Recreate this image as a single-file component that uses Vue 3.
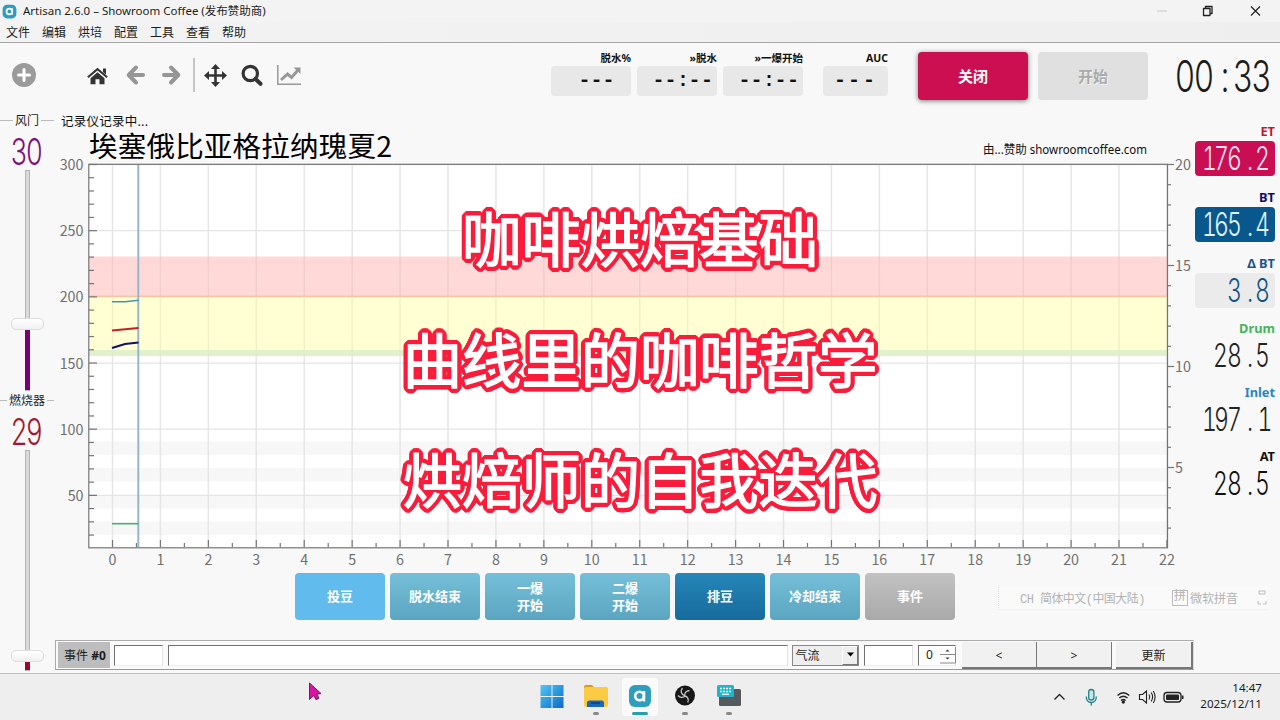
<script setup>
const menus = ['文件', '编辑', '烘培', '配置', '工具', '查看', '帮助']
const phases = [
  { label: '脱水%', value: '---', x: '33.5 45.5 57.5', cls: 'w80' },
  { label: '»脱水', value: '--:--', x: '21.5 33.5 46 57.5 70', cls: 'w80' },
  { label: '»一爆开始', value: '--:--', x: '21.5 33.5 46 57.5 70', cls: 'w80' },
  { label: 'AUC', value: '---', x: '17 31 46', cls: 'w65 auc' },
]
const events = [
  { label: '投豆', cls: 'active' },
  { label: '脱水结束', cls: '' },
  { label: '一爆\n开始', cls: '' },
  { label: '二爆\n开始', cls: '' },
  { label: '排豆', cls: 'drop' },
  { label: '冷却结束', cls: '' },
  { label: '事件', cls: 'gray' },
]
const readouts = [
  { name: 'ET', value: '176.2', cls: 'et', x: [14.5, 26.5, 39.5, 55, 67.5] },
  { name: 'BT', value: '165.4', cls: 'bt', x: [14.5, 26.5, 39.5, 55, 67.5] },
  { name: 'Δ BT', value: '3.8', cls: 'dbt', x: [39.5, 55, 67.5] },
  { name: 'Drum', value: '28.5', cls: 'drum', x: [25.5, 39.5, 55, 67.5] },
  { name: 'Inlet', value: '197.1', cls: 'inlet', x: [14.5, 26.5, 39.5, 55, 70] },
  { name: 'AT', value: '28.5', cls: 'at', x: [25.5, 39.5, 55, 67.5] },
]
const sliders = [
  { name: '风门', value: '30', cls: 'air' },
  { name: '燃烧器', value: '29', cls: 'burner' },
]
// LCD digits are condensed horizontally; cell centres are given in unscaled pixels
const SQUEEZE = 0.72
const cells = (xs) => xs.map((x) => (x / SQUEEZE).toFixed(2)).join(' ')
const condensed = `scale(${SQUEEZE} 1)`

const px = (m) => 112.5 + m * 47.93
const py = (t) => 164.5 + (300 - t) * 1.3235
const pr = (r) => 164.5 + (20 - r) * 20.2
const minutes = Array.from({ length: 23 }, (_, i) => i)
const halves = Array.from({ length: 22 }, (_, i) => i + 0.5)
const temps = [300, 250, 200, 150, 100, 50]
const minorTemps = Array.from({ length: 29 }, (_, i) => (i + 2) * 10).filter((t) => t % 50)
const rates = [20, 15, 10, 5]
const minorRates = Array.from({ length: 18 }, (_, i) => i + 2).filter((r) => r % 5)
const bands = [441.5, 468, 495, 521.5]

// Round outline for the caption: two rings of shadows
const ringOf = (radius) => Array.from({ length: 24 }, (_, i) => {
  const a = (i / 24) * Math.PI * 2
  return `${(Math.cos(a) * radius).toFixed(2)}px ${(Math.sin(a) * radius).toFixed(2)}px 0 #fa1c3b`
})
const outline = [...ringOf(4.9), ...ringOf(2.6)].join(', ')
</script>

<template>
  <div class="window">
    <header class="titlebar">
      <svg class="logo" viewBox="0 0 24 24"><rect x="1" y="1" width="22" height="22" rx="7" fill="#2f9cbd" /><circle cx="11.7" cy="12" r="4.5" fill="none" stroke="#fff" stroke-width="2.7" /><path d="M16.4 7v10" stroke="#fff" stroke-width="2.6" /></svg>
      <span class="title">Artisan 2.6.0 – Showroom Coffee (发布赞助商)</span>
      <svg class="winctl" viewBox="0 0 120 22" fill="none">
        <path d="M7 11h10" stroke="#c8c8c8" />
        <path d="M53.500 8.500h6.500v7h-6.500zM55.500 8.200v-1.700h6.500v7h-1.700" stroke="#222" stroke-width="1.300" stroke-linejoin="round" />
        <path d="M101 6.500l9 9m0-9l-9 9" stroke="#222" stroke-width="1.200" />
      </svg>
    </header>
    <nav class="menubar"><span v-for="m in menus" :key="m">{{ m }}</span></nav>

    <section class="toolbar">
      <svg class="tools" viewBox="0 43 320 64">
        <circle cx="24" cy="75" r="12" fill="#9b9b9b" />
        <path d="M24 69.500v11M18.500 75h11" stroke="#fff" stroke-width="3" stroke-linecap="round" />
        <path d="M97.500 67.800l10.300 8.700-1.300 1.500-9-7.600-9 7.600-1.300-1.500zM103 68.500h3v6l-3-2.500z" fill="#343434" />
        <path d="M97.500 72.200l7 6v6h-5v-5h-4v5h-5v-6z" fill="#343434" />
        <g fill="none" stroke="#969696" stroke-width="4" stroke-linecap="round" stroke-linejoin="round">
          <path d="M143 75h-14M136 67.500l-7.300 7.500 7.300 7.500" />
          <path d="M164 75h14M171 67.500l7.300 7.500-7.300 7.500" />
        </g>
        <path d="M194 58v34" stroke="#aaa" stroke-width="1.300" />
        <path d="M215.500 66v19M206 75.500h19" stroke="#343434" stroke-width="2.600" />
        <path d="M215.500 64l4.500 5h-9zM215.500 87l4.500-5h-9zM204 75.500l5-4.500v9zM227 75.500l-5-4.500v9z" fill="#343434" />
        <circle cx="250.300" cy="73.500" r="7.200" fill="none" stroke="#343434" stroke-width="3.200" />
        <path d="M255.500 79l5 4.800" stroke="#343434" stroke-width="4" stroke-linecap="round" />
        <path d="M277.800 65v19.300H301" fill="none" stroke="#989898" stroke-width="1.500" />
        <path d="M281 80l6.500-6 4 3.500 7-8" fill="none" stroke="#989898" stroke-width="3" />
        <path d="M293.500 67.500h7v6.500z" fill="#989898" />
      </svg>
      <div class="phases">
        <div v-for="p in phases" :key="p.label" :class="['phase', p.cls]">
          <b>{{ p.label }}</b>
          <svg class="phase-lcd" height="30"><text :x="p.x" y="20" text-anchor="middle">{{ p.value }}</text></svg>
        </div>
      </div>
      <button class="big off">关闭</button>
      <button class="big start">开始</button>
      <svg class="timer lcd" viewBox="0 0 100 44"><text :x="cells([12, 31, 52, 70, 88.5])" y="38" font-size="44" :transform="condensed">00:33</text></svg>
    </section>

    <main class="body">
      <aside class="sliders">
        <div v-for="s in sliders" :key="s.name" :class="['slider', s.cls]">
          <div class="legend"><i></i><span>{{ s.name }}</span><i></i></div>
          <svg class="slider-lcd lcd" viewBox="0 0 56 40"><text :x="cells([18.8, 34.6])" y="34.500" font-size="38" :transform="condensed">{{ s.value }}</text></svg>
          <div class="groove"><div class="handle"></div><div class="fill"></div></div>
        </div>
      </aside>

      <div class="center">
        <svg class="chart" viewBox="56 110 1138 462">
          <rect x="89" y="164.500" width="1078" height="383" fill="#fff" />
          <rect v-for="b in bands" :key="b" x="89" :y="b" width="1078" height="13.500" fill="#f7f7f7" />
          <path v-for="m in minutes" :key="'v' + m" :d="`M${px(m)} 165V547`" stroke="#e6e6e6" stroke-width="1.500" />
          <path v-for="t in temps" :key="'h' + t" :d="`M89 ${py(t)}H1167`" stroke="#e5e5e5" stroke-width="1.300" />
          <rect x="89" y="256.500" width="1078" height="39.500" fill="#ffb5b5" fill-opacity=".53" />
          <rect x="89" y="296" width="1078" height="54" fill="#ffff96" fill-opacity=".42" />
          <rect x="89" y="350" width="1078" height="6" fill="#dcefc6" fill-opacity=".85" />
          <path d="M89 296.300H1167" stroke="#f5c4a0" stroke-width="1.500" />
          <path d="M138.300 165V547" stroke="#95b7cc" stroke-width="2" />
          <g fill="none">
            <path d="M112 301.800H125L138.500 300.300" stroke="#4790bc" stroke-width="1.600" />
            <path d="M112 330.500L138.500 328" stroke="#c61e28" stroke-width="2.200" />
            <path d="M112 348L125 344L138.500 342.500" stroke="#10106e" stroke-width="2.200" />
            <path d="M112 523.700H138.500" stroke="#4fae72" stroke-width="1.600" />
          </g>
          <g stroke="#757575" stroke-width="1.200" fill="none">
            <rect x="88.800" y="164.300" width="1078.700" height="383.500" />
            <path v-for="t in temps" :key="'t' + t" :d="`M89 ${py(t)}h8`" />
            <path v-for="t in minorTemps" :key="'mt' + t" :d="`M89 ${py(t)}h5`" />
            <path v-for="m in minutes" :key="'m' + m" :d="`M${px(m)} 547v-7`" />
            <path v-for="m in halves" :key="'hm' + m" :d="`M${px(m)} 547v-4`" />
            <path v-for="r in rates" :key="'r' + r" :d="`M1167 ${pr(r)}h7`" />
            <path v-for="r in minorRates" :key="'mr' + r" :d="`M1167 ${pr(r)}h4`" />
          </g>
          <g class="ticks">
            <text v-for="t in temps" :key="'l' + t" x="83.500" :y="py(t) + 5.500" text-anchor="end">{{ t }}</text>
            <text v-for="m in minutes" :key="'lm' + m" :x="px(m)" y="564.800" text-anchor="middle">{{ m }}</text>
            <text v-for="r in rates" :key="'lr' + r" x="1175" :y="pr(r) + 5.500">{{ r }}</text>
          </g>
          <text class="msg" x="61" y="126" textLength="87">记录仪记录中...</text>
          <text class="batch" x="89" y="157" textLength="303">埃塞俄比亚格拉纳瑰夏2</text>
          <text class="sponsor" x="983" y="153.500" textLength="164" lengthAdjust="spacingAndGlyphs">由...赞助 showroomcoffee.com</text>
        </svg>
        <div class="event-row">
          <button v-for="e in events" :key="e.label" :class="['event', e.cls]">{{ e.label }}</button>
          <div class="ime">
            <span class="ime-lang">CH 简体中文(中国大陆)</span>
            <span class="ime-box">拼</span><span>微软拼音</span>
            <svg viewBox="0 0 10 18" width="10" height="18" fill="none" stroke="#bbb"><path d="M2 5V2h6v3zM1 12v3h3M9 12v3H6" /></svg>
          </div>
        </div>
        <div class="record">
          <span class="rec-label">事件&nbsp;<b>#0</b></span>
          <span class="field time"></span>
          <span class="field note"></span>
          <span class="combo">气流<i><svg width="9" height="6"><path d="M1 0.500h7L4.500 4.500z" /></svg></i></span>
          <span class="field val"></span>
          <span class="field spin">0<svg viewBox="0 0 16 18" width="16" height="18"><path d="M0 8.500h15.500M0 17h15.500M15.500 1v16" fill="none" stroke="#888" /><path d="M5.500 5.500L7.500 3.500 9.500 5.500zM5.500 11.500h4L7.500 13.500z" fill="#333" /></svg></span>
          <span class="rbtn prev">&lt;</span>
          <span class="rbtn next">&gt;</span>
          <span class="rbtn upd">更新</span>
        </div>
      </div>

      <aside class="readouts">
        <div v-for="r in readouts" :key="r.name" :class="['readout', r.cls]">
          <b>{{ r.name }}</b>
          <svg class="lcd" viewBox="0 0 80 35"><text :x="cells(r.x)" y="28.500" font-size="32" :transform="condensed">{{ r.value }}</text></svg>
        </div>
      </aside>
    </main>

    <footer class="taskbar">
      <div class="apps">
        <span class="app"><svg viewBox="0 0 36 38"><defs><linearGradient id="win" x2="1" y2="1"><stop stop-color="#50c8f5" /><stop offset="1" stop-color="#0b68c8" /></linearGradient></defs><path d="M6.500 7h11v11h-11zM18.500 7h11v11h-11zM6.500 19h11v11h-11zM18.500 19h11v11h-11z" fill="url(#win)" /></svg></span>
        <span class="app run"><svg viewBox="0 0 36 38"><path d="M6 9q0-2 2-2h6l3 3H6z" fill="#d99a18" /><rect x="6" y="9" width="24" height="20" rx="2" fill="#fccb43" /><path d="M9 29v-4q0-2.500 2.500-2.500h12q2.500 0 2.500 2.500v4z" fill="#1768bd" /><path d="M13 25h9" stroke="#0b4994" stroke-width="2" /></svg></span>
        <span class="app current"><svg viewBox="0 0 36 38"><rect x="7" y="7" width="22" height="22" rx="6" fill="#2f9dbd" /><circle cx="17.500" cy="18" r="4.300" fill="none" stroke="#fff" stroke-width="2.600" /><path d="M22 13v10.500" stroke="#fff" stroke-width="2.500" /></svg></span>
        <span class="app run"><svg viewBox="0 0 36 38"><circle cx="18" cy="17.500" r="10" fill="#171717" /><g fill="none" stroke="#c4c4c4" stroke-width="1.300"><path d="M18 18c-1-3 1-5 4.500-5.500M18 18c3 .8 4 3.500 2.800 6.500M18 18c-2.200 2.200-5 1.800-7-.500M18 18c-4-1.500-5-5-2.500-8" /></g></svg></span>
        <span class="app run"><svg viewBox="0 0 36 38"><rect x="8" y="11" width="22" height="17" rx="1.500" fill="#555a5e" /><rect x="6" y="7" width="17" height="12" rx="1.500" fill="#20b4cd" /><path d="M9 10.500h11M9 13.500h11" stroke="#fff" stroke-width="1.500" stroke-dasharray="2 1" /><path d="M11 16.300h7" stroke="#fff" stroke-width="1.300" /></svg></span>
      </div>
      <svg class="tray" viewBox="1050 673 140 47" fill="none" stroke="#222" stroke-width="1.300">
        <path d="M1054.500 698.500l5-5 5 5" />
        <g stroke="#24838b"><rect x="1088.700" y="688.500" width="5.200" height="10.500" rx="2.600" fill="#c9e4e5" /><path d="M1086.300 695.500q0 6 5 6t5-6M1091.300 701.500v3" /></g>
        <path d="M1117.500 694.500q5.800-5.500 11.800 0M1119.300 697q4-3.500 8.200 0M1121 699.500q2.300-2 4.600 0" /><circle cx="1123.300" cy="701" r="1" fill="#222" />
        <path d="M1139.500 693.500h3l4-3.500v12l-4-3.500h-3zM1149 693.500q1.500 2.500 0 5M1151.200 691.500q2.800 4.500 0 9M1153.300 690q3.600 6 0 12" stroke-width="1.100" />
        <rect x="1164" y="691.500" width="17" height="9.500" rx="3" /><rect x="1166" y="693.500" width="13" height="5.500" rx="1" fill="#222" stroke="none" /><path d="M1182.700 694.500v3.500" stroke-width="1.600" />
      </svg>
      <div class="clock"><span>14:47</span><span>2025/12/11</span></div>
    </footer>

    <div class="caption" :style="{ textShadow: outline }"><p>咖啡烘焙基础</p><p>曲线里的咖啡哲学</p><p>烘焙师的自我迭代</p></div>
    <svg class="pointer" viewBox="0 0 14 20"><path d="M1.500 1v16.500l4.300-4 2.200 4.200 3-1.500-2.200-4 4.200-.600z" fill="#dc12a6" stroke="#65234f" stroke-width="1" /></svg>
  </div>
</template>

<style>
body { margin: 0; overflow: hidden; }
</style>

<style scoped>
* { box-sizing: border-box; }
svg { display: block; overflow: visible; }
.window { position: relative; width: 1280px; height: 720px; background: #f8f8f8; color: #1c1c1c; font: 12px/16px "Noto Sans", "Noto Sans CJK SC", sans-serif; overflow: hidden; display: flex; flex-direction: column; }
.titlebar { height: 22px; flex: none; background: #f3f3f3; display: flex; align-items: center; padding-left: 2px; }
.logo { width: 15px; height: 15px; }
.title { margin-left: 6px; font-size: 11.500px; white-space: nowrap; }
.winctl { width: 120px; height: 22px; margin-left: auto; margin-right: 10px; }
.menubar { height: 21px; flex: none; background: linear-gradient(90deg, #f3f3f3, #eee); border-bottom: 1px solid #a6a6a6; display: flex; padding-left: 6px; gap: 12px; line-height: 22px; }
.toolbar { height: 67px; flex: none; display: flex; align-items: flex-start; }
.tools { width: 320px; height: 64px; }
.phases { display: flex; gap: 6px; margin-left: 231px; padding-top: 8px; }
.phase { display: flex; flex-direction: column; text-align: right; font-size: 10.500px; line-height: 15px; color: #111; }
.phase b { white-space: nowrap; }
.w80 { width: 80px; }
.w65 { width: 65px; }
.auc { margin-left: 14px; }
.phase-lcd { width: 100%; background: #e8e8e8; border-radius: 4px; font: 600 20px "Liberation Mono", monospace; fill: #111; }
.big { width: 110px; height: 48px; border: 0; border-radius: 4px; font: bold 15px "Noto Sans CJK SC", sans-serif; margin-top: 9px; padding: 0 0 1px; }
.off { margin-left: 30px; background: #cb0f50; color: #fff; box-shadow: 0 1px 5px #777; }
.start { margin-left: 10px; background: #e0e0e0; color: #aaa; font-weight: bold; text-shadow: 1px 1px #f4f4f4; }
.lcd text { font-family: Inter, sans-serif; font-weight: 300; font-feature-settings: "tnum"; fill: currentColor; text-anchor: middle; }
.timer { width: 100px; height: 44px; margin: 11px 0 0 25px; }
.body { height: 563px; flex: none; display: flex; }
.sliders { width: 56px; flex: none; padding-top: 1px; }
.slider { height: 280px; display: flex; flex-direction: column; align-items: center; }
.legend { width: 54px; height: 20px; display: flex; align-items: center; justify-content: center; gap: 2px; white-space: nowrap; font-size: 12px; margin-right: 2px; }
.legend i { flex: 1; height: 1px; background: #bbb; }
.slider-lcd { width: 56px; height: 39px; color: #7a127a; }
.burner .slider-lcd { color: #a0192e; }
.groove { width: 5px; height: 222px; margin-left: -1px; border: 1px solid #b5b5b5; background: #dadada; display: flex; flex-direction: column; align-items: center; padding-top: 147px; }
.burner .groove { padding-top: 199px; }
.handle { width: 33px; height: 12px; flex: none; border: 1px solid #ddd; border-radius: 5px; background: linear-gradient(#fff, #f1f1f1); }
.fill { width: 5px; flex: 1; background: #7a007a; }
.burner .fill { background: #a00428; }
.center { width: 1138px; flex: none; }
.chart { width: 1138px; height: 462px; }
.ticks { font: 14.300px "Noto Sans CJK SC", sans-serif; fill: #707070; }
.msg { font-size: 12.500px; fill: #111; }
.batch { font: 28.500px "Noto Sans CJK SC", sans-serif; fill: #000; }
.sponsor { font-size: 12px; fill: #111; }
.event-row { display: flex; align-items: center; gap: 5px; height: 48px; padding-left: 239px; }
.event { width: 90px; height: 47px; flex: none; border: 0; border-radius: 4px; padding: 0 0 1px; white-space: pre-line; font: bold 13px/17px "Noto Sans CJK SC", sans-serif; color: #fff; background: linear-gradient(#75bfd9, #5ba5c0); }
.event.active { background: #61bbed; }
.event.drop { background: linear-gradient(#2687b8, #176a9c); }
.event.gray { background: linear-gradient(#c2c2c2, #a9a9a9); }
.ime { margin: 4px 0 0 38px; width: 275px; height: 23px; border-left: 1px dotted #ddd; border-bottom: 1px solid #f0f0f0; background: #fafafa; display: flex; align-items: center; padding-left: 21px; color: #b3b3b3; white-space: nowrap; font: 12px "Liberation Mono", "Noto Sans CJK SC", monospace; }
.ime-lang { width: 152px; letter-spacing: -.55px; }
.ime-box { border: 1px solid #bbb; width: 16px; height: 16px; line-height: 13px; margin-right: 2px; text-align: center; }
.ime svg { margin-left: 19px; }
.record { margin-top: 20px; margin-left: -1px; width: 1139px; height: 30px; border: 1px solid #aaa; border-bottom-color: #999; border-right-color: #ddd; display: flex; align-items: center; background: #fafafa; }
.rec-label { width: 52px; height: 26px; line-height: 27px; margin-left: 2px; background: #bdbdbd; padding-left: 6px; white-space: nowrap; }
.field { height: 21px; flex: none; background: #fff; border: 1px solid #707070; border-right-color: #e4e4e4; border-bottom-color: #eee; }
.time { width: 49px; margin-left: 4px; }
.note { width: 620px; margin-left: 5px; }
.combo { width: 68px; height: 21px; margin-left: 4px; border: 1px solid #888; background: #eee; display: flex; justify-content: space-between; padding-left: 3px; line-height: 20px; }
.combo i { width: 16px; border: 1px solid #777; border-left-color: #fff; border-top-color: #fff; display: grid; place-items: center; }
.val { width: 49px; margin-left: 5px; }
.spin { width: 38px; margin-left: 5px; display: flex; align-items: center; padding-left: 7px; gap: 7px; }
.rbtn { height: 27px; flex: none; line-height: 27px; text-align: center; background: #f1f1f1; border-right: 1px solid #777; border-bottom: 2px solid #777; }
.prev { width: 75px; margin-left: 6px; }
.next { width: 75px; }
.upd { width: 77px; margin-left: 4px; border-right-width: 2px; }
.readouts { width: 86px; flex: none; padding: 13px 5px 0 1px; }
.readout { height: 65px; display: flex; flex-direction: column; text-align: right; }
.readout b { height: 18px; font-size: 12.800px; line-height: 17px; }
.readout .lcd { width: 80px; height: 35px; border-radius: 4px; }
.et { color: #c2182a; height: 66px; }
.et .lcd { background: #c90e54; color: #ffe4ef; }
.bt { color: #100b65; height: 66px; }
.bt .lcd { background: #08588d; color: #e1f4ff; }
.dbt { color: #1b5589; }
.dbt .lcd { background: #ebebeb; color: #145384; }
.drum { color: #43b45b; height: 64px; }
.inlet { color: #2b83bf; height: 64px; }
.at { color: #111; }
.drum .lcd, .inlet .lcd { color: #222; }
.taskbar { height: 47px; flex: none; background: #eee; border-top: 1px solid #bfbfbf; display: flex; align-items: center; padding-right: 18px; }
.apps { display: flex; gap: 8.400px; margin-left: 533.500px; }
.app { width: 36px; height: 38px; border-radius: 3px; display: flex; flex-direction: column; align-items: center; }
.app svg { width: 36px; height: 38px; }
.app::after { content: ""; width: 0; height: 3px; border-radius: 2px; margin-top: -4px; }
.run::after { width: 6px; background: #888; }
.current { background: #fafafa; }
.current::after { width: 16px; background: #25a1a9; }
.tray { width: 140px; height: 47px; margin-left: auto; }
.clock { width: 72px; display: flex; flex-direction: column; align-items: flex-end; font-size: 11.600px; line-height: 16px; padding-bottom: 3px; }
.caption { position: absolute; left: 0; top: 176px; width: 1280px; text-align: center; pointer-events: none; }
.caption p { margin: 0; height: 120.500px; line-height: 120.500px; font-family: "Noto Sans CJK SC", sans-serif; font-weight: 400; font-size: 59.300px; color: #fff; -webkit-text-stroke: 1.500px #fff; }
.pointer { position: absolute; left: 308px; top: 682px; width: 14px; height: 20px; }
</style>
